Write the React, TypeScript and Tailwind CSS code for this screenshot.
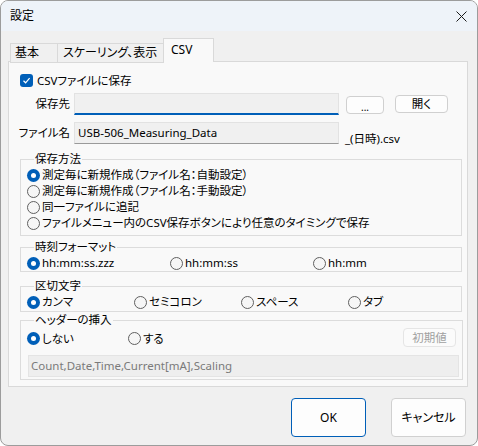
import React from "react";

const font =
  "font-['Noto_Sans','Noto_Sans_CJK_JP',sans-serif] [font-feature-settings:'palt'] text-[11.5px] leading-[14px] text-black";

function Radio({ checked, label }: { checked?: boolean; label: string }) {
  return (
    <div className="flex items-center gap-[2px]">
      {checked ? (
        <span className="flex h-[13px] w-[13px] items-center justify-center rounded-full bg-[#005fb8]">
          <span className="h-[5px] w-[5px] rounded-full bg-white" />
        </span>
      ) : (
        <span className="h-[13px] w-[13px] rounded-full border border-[#606060] bg-[#f6f6f6]" />
      )}
      <span className="whitespace-nowrap">{label}</span>
    </div>
  );
}

function Group({
  title,
  className,
  children,
}: {
  title: string;
  className?: string;
  children: React.ReactNode;
}) {
  return (
    <fieldset
      className={`ml-[11px] w-[442px] border border-[#dcdcdc] pl-[6px] ${className ?? ""}`}
    >
      <legend className="ml-[7px] px-[1px] leading-[14px]">{title}</legend>
      {children}
    </fieldset>
  );
}

export default function App() {
  return (
    <div
      className={`flex h-[446px] w-[478px] flex-col overflow-hidden rounded-[8px] border border-[#9c9c9c] bg-[#f0f0f0] ${font}`}
    >
      {/* title bar */}
      <div className="flex h-[30px] items-center justify-between bg-[#eef3f9] pl-[9px] pr-[9px] text-[12px]">
        <span>設定</span>
        <svg width="11" height="11" viewBox="0 0 11 11" className="mr-[1px]">
          <path d="M0.5 0.5 L10.5 10.5 M10.5 0.5 L0.5 10.5" stroke="#1a1a1a" strokeWidth="1" />
        </svg>
      </div>

      {/* tabs */}
      <div className="ml-[9px] mt-[8px] flex h-[23px] items-end whitespace-nowrap text-[12px]">
        <div className="relative top-[1px] flex h-[20px] w-[48px] items-center border border-[#d9d9d9] bg-[#f0f0f0] pl-[4px]">
          基本
        </div>
        <div className="relative top-[1px] -ml-px flex h-[20px] w-[107px] items-center border border-[#d9d9d9] bg-[#f0f0f0] pl-[5px]">
          スケーリング、表示
        </div>
        <div className="relative z-10 -ml-px flex h-[24px] w-[51px] items-center border border-b-0 border-[#d9d9d9] bg-[#f9f9f9] pl-[7px] pb-[1px]">
          CSV
        </div>
      </div>

      {/* panel */}
      <div className="-mt-px ml-[7px] h-[326px] w-[460px] border border-[#d9d9d9] bg-[#f9f9f9]">
        <div className="ml-[11px] mt-[12px] flex h-[13px] items-center gap-[4px]">
          <span className="flex h-[13px] w-[13px] items-center justify-center rounded-[3px] bg-[#005fb8]">
            <svg width="9" height="9" viewBox="0 0 9 9">
              <path d="M1.5 4.8 L3.6 6.8 L7.6 2.2" fill="none" stroke="white" strokeWidth="1.2" />
            </svg>
          </span>
          <span>CSVファイルに保存</span>
        </div>

        <div className="mt-[6px] flex items-start">
          <div className="flex h-[22px] w-[65px] items-center justify-end pr-[4px]">保存先</div>
          <div className="h-[22px] w-[265px] border border-[#e2e2e2] border-b-2 border-b-[#005fb8] bg-[#f0f0f0]" />
          <button className="ml-[7px] mt-[3px] flex h-[18px] w-[38px] items-end justify-center rounded-[4px] border border-[#d0d0d0] bg-[#fdfdfd] pb-[1px] text-[10px] leading-[10px]">
            ...
          </button>
          <button className="ml-[11px] mt-[2px] flex h-[18px] w-[53px] items-center justify-center rounded-[4px] border border-[#d0d0d0] bg-[#fdfdfd]">
            開く
          </button>
        </div>

        <div className="mt-[7px] flex items-start">
          <div className="flex h-[22px] w-[65px] items-center justify-end pr-[4px]">ファイル名</div>
          <div className="flex h-[22px] w-[265px] items-center border border-[#e2e2e2] border-b-[#9a9a9a] bg-[#f0f0f0] pl-[3px]">
            USB-506_Measuring_Data
          </div>
          <span className="ml-[6px] pt-[10px]">_(日時).csv</span>
        </div>

        <Group title="保存方法" className="mt-[6px] pb-[4px] pt-[1px]">
          <div className="flex h-[16px] items-center">
            <Radio checked label="測定毎に新規作成（ファイル名：自動設定）" />
          </div>
          <div className="flex h-[16px] items-center">
            <Radio label="測定毎に新規作成（ファイル名：手動設定）" />
          </div>
          <div className="flex h-[16px] items-center">
            <Radio label="同一ファイルに追記" />
          </div>
          <div className="flex h-[16px] items-center">
            <Radio label="ファイルメニュー内のCSV保存ボタンにより任意のタイミングで保存" />
          </div>
        </Group>

        <Group title="時刻フォーマット" className="mt-[4px] pt-[1px]">
          <div className="flex h-[16px] items-center">
            <div className="w-[143px]">
              <Radio checked label="hh:mm:ss.zzz" />
            </div>
            <div className="w-[143px]">
              <Radio label="hh:mm:ss" />
            </div>
            <Radio label="hh:mm" />
          </div>
        </Group>

        <Group title="区切文字" className="mt-[7px] pb-[1px] pt-[1px]">
          <div className="flex h-[16px] items-center">
            <div className="w-[107px]">
              <Radio checked label="カンマ" />
            </div>
            <div className="w-[107px]">
              <Radio label="セミコロン" />
            </div>
            <div className="w-[107px]">
              <Radio label="スペース" />
            </div>
            <Radio label="タブ" />
          </div>
        </Group>

        <Group title="ヘッダーの挿入" className="mt-px w-[443px] pb-[2px] pr-[2px]">
          <div className="mt-[1px] flex h-[21px] items-center">
            <div className="w-[101px]">
              <Radio checked label="しない" />
            </div>
            <Radio label="する" />
            <button className="ml-auto mr-[4px] flex h-[19px] w-[53px] self-start items-center justify-center rounded-[4px] border border-[#e5e5e5] bg-[#fbfbfb] text-[#a0a0a0]">
              初期値
            </button>
          </div>
          <div className="ml-[1px] mt-[6px] flex h-[22px] w-[431px] items-center border border-[#e4e4e4] bg-[#eeeeee] pl-[2px] text-[#7a7a7a]">
            Count,Date,Time,Current[mA],Scaling
          </div>
        </Group>
      </div>

      {/* footer buttons */}
      <div className="mt-[11px] flex justify-end gap-[25px] pr-[11px] text-[12px]">
        <button className="flex h-[39px] w-[75px] items-center justify-center rounded-[4px] border border-[#005fb8] bg-[#fdfdfd]">
          OK
        </button>
        <button className="flex h-[39px] w-[75px] items-center justify-center rounded-[4px] border border-[#d0d0d0] bg-[#fdfdfd]">
          キャンセル
        </button>
      </div>
    </div>
  );
}
